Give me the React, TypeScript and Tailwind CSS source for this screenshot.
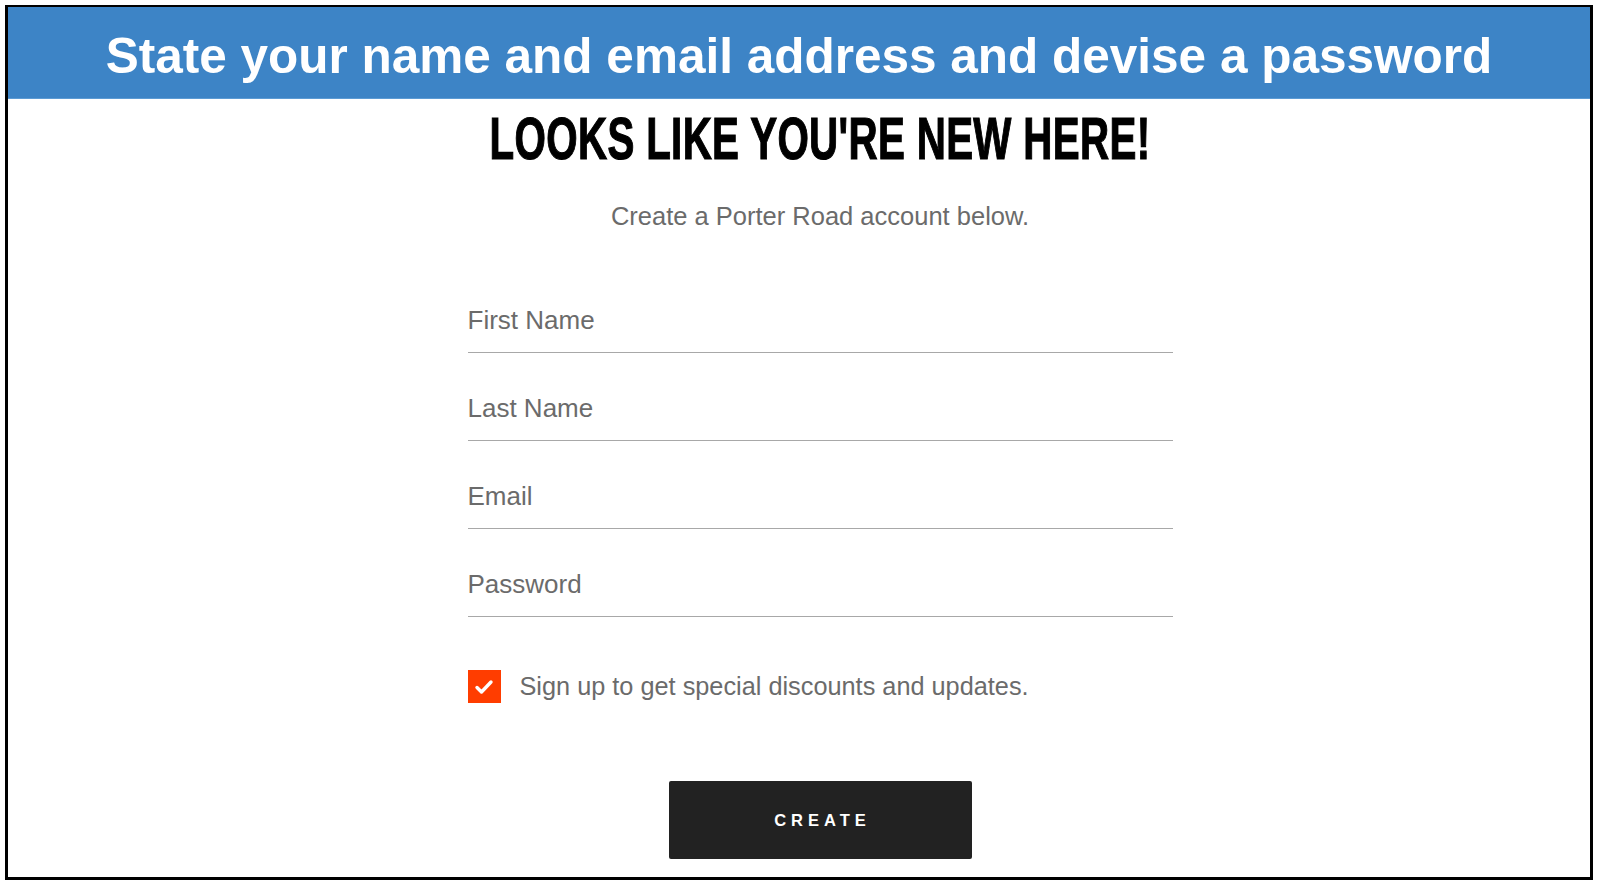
import React from 'react';

const fields = ['First Name', 'Last Name', 'Email', 'Password'];

function Field({ label }: { label: string }) {
  return (
    <div className="w-full border-b border-[#a8a8a8] pt-[43px] pb-[19px]">
      <div className="text-[26px] leading-[25px] text-[#6b6b6b]">{label}</div>
    </div>
  );
}

export default function App() {
  return (
    <div className="w-[1600px] h-[886px] bg-white pt-[5px] pl-[5px] font-['Liberation_Sans',Arial,sans-serif]">
      <div className="w-[1588px] h-[875px] border-[3px] border-t-2 border-black flex flex-col overflow-hidden">
        <div className="h-[92px] bg-[#3d84c6] border-b border-[#5c9bd4] flex items-center justify-center">
          <h1 className="text-white font-bold text-[49.5px] leading-none pt-[6px]">
            State your name and email address and devise a password
          </h1>
        </div>

        <div className="flex flex-col items-center pl-[42px]">
          <h2 className="mt-[10px] w-full text-center text-[60px] leading-[60px] font-bold text-black scale-x-[0.672] origin-center tracking-[0.5px] [-webkit-text-stroke:1.2px_black]">
            LOOKS LIKE YOU'RE NEW HERE!
          </h2>
          <p className="mt-[35px] text-[25.5px] leading-[25px] text-[#6b6b6b]">
            Create a Porter Road account below.
          </p>

          <form className="w-[705px] mt-[36px] flex flex-col" onSubmit={(e) => e.preventDefault()}>
            {fields.map((f) => (
              <Field key={f} label={f} />
            ))}

            <label className="mt-[53px] flex items-center gap-[19px] cursor-pointer">
              <span className="w-[33px] h-[33px] bg-[#ff3d00] flex items-center justify-center shrink-0">
                <svg width="24" height="24" viewBox="0 0 24 24" fill="none">
                  <path d="M5 12.5l4.5 4.5L19 7" stroke="white" strokeWidth="3.4" strokeLinecap="round" strokeLinejoin="round" />
                </svg>
              </span>
              <span className="text-[25.3px] leading-[25px] text-[#6b6b6b]">
                Sign up to get special discounts and updates.
              </span>
            </label>

            <button
              type="submit"
              className="self-center mt-[78px] w-[303px] h-[78px] bg-[#222222] text-white font-bold text-[16.5px] tracking-[5px] pl-[5px] rounded-[2px]"
            >
              CREATE
            </button>
          </form>
        </div>
      </div>
    </div>
  );
}
